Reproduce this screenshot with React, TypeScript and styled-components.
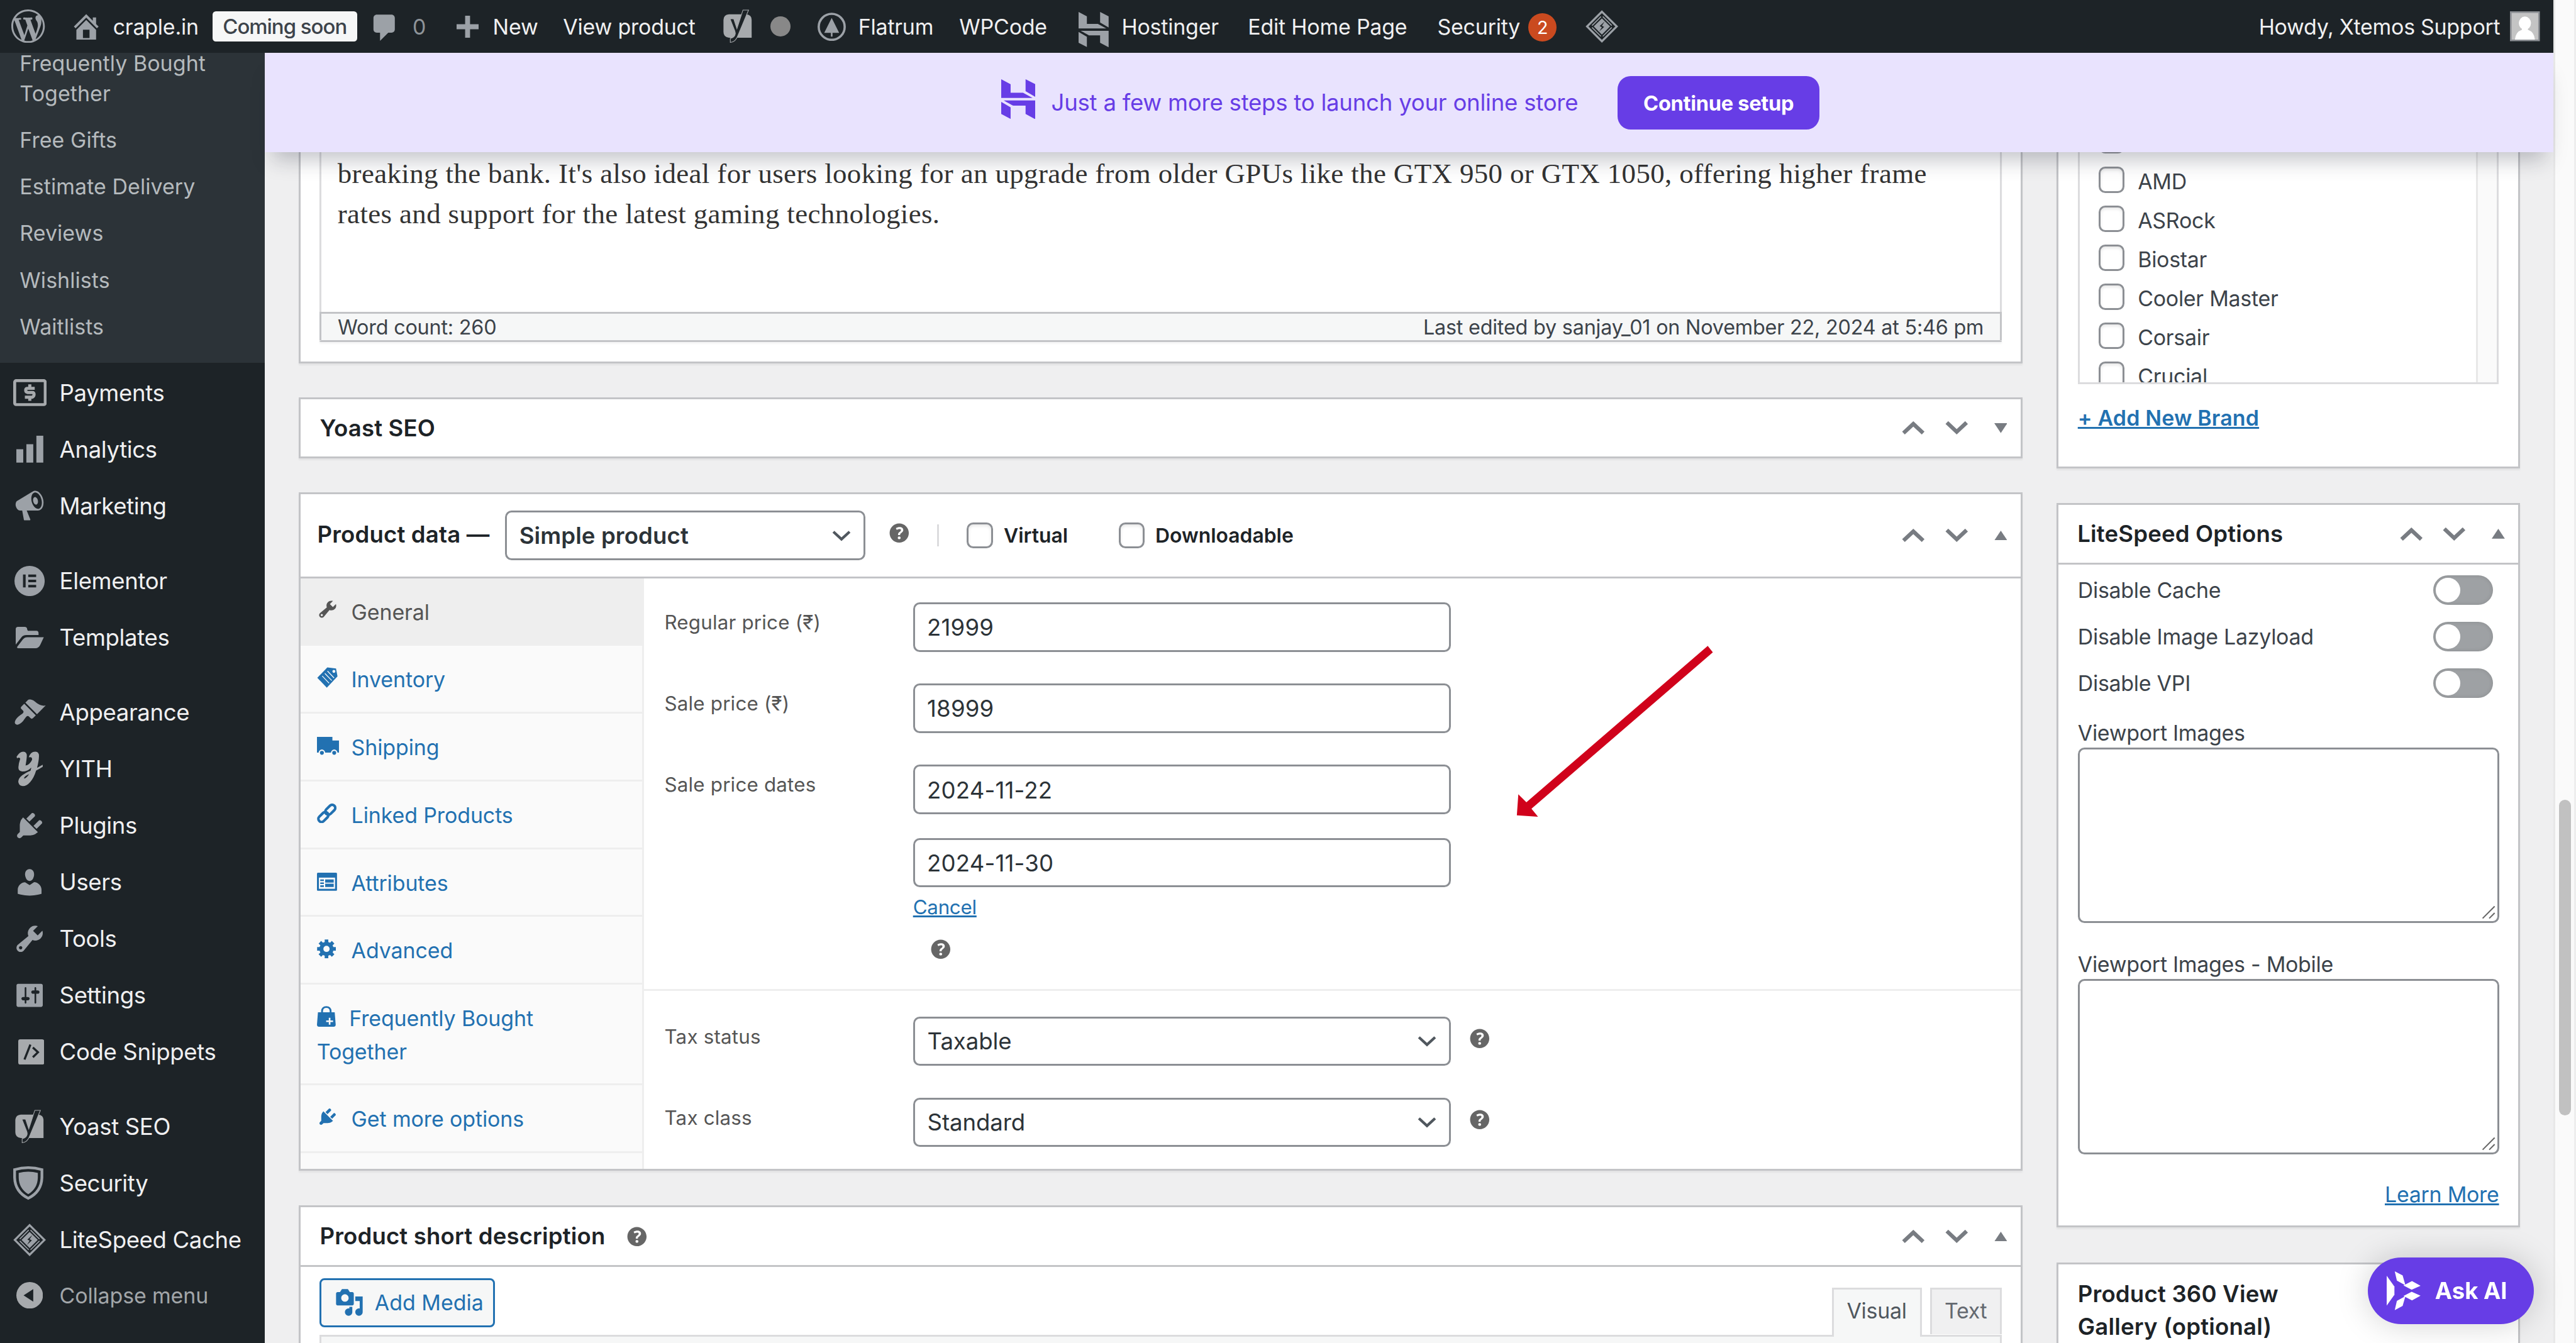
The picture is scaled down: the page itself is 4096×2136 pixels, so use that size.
import React from 'react';
import styled, { createGlobalStyle, css } from 'styled-components';

/* 1rem = ten layout units; every size below is expressed in it. */
const line = '0.115rem';
const c = {
  bar: '#1d2327',
  sub: '#2c3338',
  icon: '#9ca1a7',
  iconSvg: '#a7aaad',
  text: '#f0f0f1',
  ink: '#1d2327',
  body: '#3c434a',
  border: '#c3c4c7',
  field: '#8c8f94',
  link: '#2271b1',
  page: '#efeff0',
  brand: '#673de6',
};

const Global = createGlobalStyle`
  html { font-size: 26.1224px; }
  body { margin: 0; background: ${c.page}; overflow: hidden; }
  * { box-sizing: border-box; }
  #root { font-family: Inter, "Liberation Sans", sans-serif; font-size: 1.3rem; color: ${c.body}; letter-spacing: -0.008em; }
`;

/* ---------- shell ---------- */
const Page = styled.div`
  display: flex;
  width: 156.8rem;
  height: 81.77rem;
  overflow: hidden;
`;
const Shell = styled.div`
  display: flex;
  flex-direction: column;
  width: 155.43rem;
  height: 100%;
  flex: none;
`;
const ScrollTrack = styled.div`
  flex: 1;
  background: #fafafa;
  border-left: ${line} solid #e8e8e8;
  border-right: ${line} solid #ededed;
  padding: 48.7rem 0.16rem 0 0.24rem;
`;
const ScrollThumb = styled.div`
  width: 0.72rem;
  height: 19.2rem;
  border-radius: 0.4rem;
  background: #c1c1c1;
`;
const Body = styled.div`
  display: flex;
  flex: 1;
  min-height: 0;
`;

/* ---------- admin bar ---------- */
const AdminBar = styled.header`
  display: flex;
  align-items: center;
  height: 3.2rem;
  flex: none;
  background: ${c.bar};
  color: ${c.text};
  position: relative;
  z-index: 3;
`;
const BarItem = styled.div<{ $gap: number; $w: number; $dim?: boolean; $drop?: number }>`
  display: flex;
  align-items: center;
  flex: none;
  margin-left: ${(p) => p.$gap}rem;
  width: ${(p) => p.$w}rem;
  padding-top: ${(p) => (p.$drop ?? 0.06)}rem;
  white-space: nowrap;
  color: ${(p) => (p.$dim ? '#8f9499' : c.text)};
  letter-spacing: -0.006em;
`;
const SoonBadge = styled.div`
  display: flex;
  align-items: center;
  justify-content: center;
  flex: none;
  margin-left: 0.84rem;
  width: 8.79rem;
  height: 1.86rem;
  border-radius: 0.2rem;
  background: #f6f7f7;
  color: ${c.body};
  font-size: 1.26rem;
  font-weight: 500;
  letter-spacing: -0.03em;
`;
const CountBadge = styled.div`
  display: flex;
  align-items: center;
  justify-content: center;
  width: 1.72rem;
  height: 1.72rem;
  margin: 0.1rem 0 0 0.44rem;
  border-radius: 50%;
  background: #ca4a1f;
  color: #fff;
  font-size: 1.1rem;
`;
const GreyDot = styled.div`
  width: 1.22rem;
  height: 1.22rem;
  margin-left: 1.1rem;
  border-radius: 50%;
  background: #888;
`;
const BarEnd = styled.div`
  display: flex;
  align-items: center;
  gap: 0.6rem;
  margin-left: auto;
  padding-right: 0.83rem;
`;
const Howdy = styled.span`
  padding-top: 0.06rem;
  letter-spacing: -0.008em;
`;

/* ---------- sidebar ---------- */
const Sidebar = styled.nav`
  display: flex;
  flex-direction: column;
  width: 16.12rem;
  flex: none;
  background: ${c.bar};
`;
const Submenu = styled.div`
  display: flex;
  flex-direction: column;
  justify-content: flex-end;
  height: 18.89rem;
  padding: 0 0 0.77rem 1.2rem;
  background: ${c.sub};
  overflow: hidden;
`;
const SubItem = styled.a<{ $tall?: boolean }>`
  display: flex;
  align-items: center;
  flex: none;
  width: 13rem;
  height: ${(p) => (p.$tall ? 4.67 : 2.84)}rem;
  line-height: 1.84rem;
  color: #b5babd;
  letter-spacing: 0.002em;
`;
const MenuRow = styled.a<{ $gapBefore?: boolean; $muted?: boolean }>`
  display: flex;
  align-items: center;
  flex: none;
  height: ${(p) => (p.$muted ? 3.3 : 3.445)}rem;
  margin-top: ${(p) => (p.$gapBefore ? 1.12 : 0)}rem;
  font-size: ${(p) => (p.$muted ? 1.3 : 1.4)}rem;
  letter-spacing: ${(p) => (p.$muted ? -0.004 : -0.01)}em;
  color: ${(p) => (p.$muted ? '#a2a6a9' : c.text)};
  white-space: nowrap;
`;
const MenuList = styled.div`
  padding-top: 0.1rem;
`;
const IconCell = styled.span`
  display: flex;
  justify-content: center;
  align-items: center;
  width: 3.62rem;
  flex: none;
`;

/* ---------- banner ---------- */
const Content = styled.main`
  display: flex;
  flex-direction: column;
  flex: 1;
  min-width: 0;
  background: ${c.page};
`;
const Banner = styled.div`
  display: flex;
  align-items: center;
  height: 6.07rem;
  flex: none;
  padding-left: 44.84rem;
  background: #e9e3fe;
  box-shadow: 0 1rem 1.2rem -0.5rem rgba(29, 35, 50, 0.27);
  position: relative;
  z-index: 2;
`;
const BannerLogo = styled.span`
  display: flex;
  padding-bottom: 0.42rem;
`;
const BannerText = styled.div`
  width: 35.43rem;
  padding-left: 0.96rem;
  color: ${c.brand};
  font-size: 1.4rem;
  letter-spacing: -0.0065em;
  white-space: nowrap;
`;
const SetupButton = styled.div`
  display: flex;
  align-items: center;
  justify-content: center;
  width: 12.3rem;
  height: 3.28rem;
  margin-top: 0.05rem;
  border-radius: 0.8rem;
  background: ${c.brand};
  color: #fff;
  font-size: 1.25rem;
  font-weight: 700;
  letter-spacing: -0.01em;
`;

/* ---------- post boxes ---------- */
const Canvas = styled.div`
  display: flex;
  gap: 2.07rem;
  flex: 1;
  min-height: 0;
  overflow: hidden;
  padding-left: 2.07rem;
`;
const Column = styled.div<{ $w: number }>`
  display: flex;
  flex-direction: column;
  width: ${(p) => p.$w}rem;
  flex: none;
`;
const Box = styled.section<{ $h: number; $mb?: number; $open?: boolean }>`
  display: flex;
  flex-direction: column;
  flex: none;
  height: ${(p) => p.$h}rem;
  margin-bottom: ${(p) => p.$mb ?? 0}rem;
  background: #fff;
  border: ${line} solid ${c.border};
  ${(p) => p.$open && css`border-top: 0;`}
  box-shadow: 0 0.1rem 0.1rem rgba(0, 0, 0, 0.05);
`;
const BoxHead = styled.div<{ $h: number; $line?: boolean; $pl?: number }>`
  display: flex;
  align-items: center;
  flex: none;
  height: ${(p) => p.$h}rem;
  padding-left: ${(p) => p.$pl ?? 1.16}rem;
  padding-right: 0.82rem;
  ${(p) => p.$line && css`border-bottom: ${line} solid ${c.border};`}
`;
const Title = styled.h2<{ $w?: number }>`
  margin: 0;
  font-size: 1.4rem;
  font-weight: 600;
  letter-spacing: 0.004em;
  color: ${c.ink};
  white-space: nowrap;
  width: ${(p) => (p.$w ? `${p.$w}rem` : 'auto')};
  padding-bottom: ${(p) => (p.$w ? 0.1 : 0)}rem;
`;
const Actions = styled.div`
  display: flex;
  align-items: center;
  margin-left: auto;
`;
const ActionGap = styled.span<{ $w: number }>`
  width: ${(p) => p.$w}rem;
`;

/* ---------- editor ---------- */
const Editor = styled.div`
  display: flex;
  flex-direction: column;
  width: 102.4rem;
  height: 11.57rem;
  margin-left: 1.16rem;
  border: ${line} solid #dcdcde;
  border-top: 0;
  border-bottom-color: ${c.border};
  box-shadow: 0 0.1rem 0.1rem rgba(0, 0, 0, 0.04);
`;
const Prose = styled.p`
  flex: 1;
  margin: 0;
  padding: 0.12rem 0 0 0.97rem;
  font-family: "Liberation Serif", "Noto Serif", serif;
  font-size: 1.72rem;
  line-height: 2.44rem;
  letter-spacing: 0.0082em;
  color: #333;
  white-space: nowrap;
`;
const StatusBar = styled.div`
  display: flex;
  align-items: center;
  justify-content: space-between;
  height: 1.72rem;
  margin: 0 -${line};
  padding: 0 1rem 0 0.98rem;
  border: ${line} solid ${c.border};
  border-bottom: 0;
  background: #f6f7f7;
  font-size: 1.24rem;
  letter-spacing: -0.007em;
`;

/* ---------- product data ---------- */
const field = css`
  display: flex;
  align-items: center;
  justify-content: space-between;
  height: 3rem;
  border: ${line} solid ${c.field};
  border-radius: 0.4rem;
  background: #fff;
  color: #2c3338;
  font-size: 1.4rem;
  flex: none;
`;
const Input = styled.div`
  ${field}
  width: 32.75rem;
  padding: 0.08rem 0 0 0.74rem;
  letter-spacing: 0.005em;
`;
const Select = styled.div<{ $w?: number; $bold?: boolean }>`
  ${field}
  width: ${(p) => p.$w ?? 32.75}rem;
  padding: 0.06rem 0.76rem 0 0.76rem;
  font-weight: ${(p) => (p.$bold ? 600 : 400)};
  letter-spacing: ${(p) => (p.$bold ? 0.003 : -0.002)}em;
`;
const TypeRule = styled.span`
  width: ${line};
  height: 1.35rem;
  margin: 0 1.7rem 0 1.46rem;
  background: #dcdcde;
`;
const Check = styled.span`
  width: 1.6rem;
  height: 1.6rem;
  flex: none;
  border: ${line} solid ${c.field};
  border-radius: 0.4rem;
  background: #fff;
  box-shadow: inset 0 0.1rem 0.2rem rgba(0, 0, 0, 0.1);
`;
const CheckLabel = styled.span<{ $w: number }>`
  width: ${(p) => p.$w}rem;
  padding-left: 0.64rem;
  font-size: 1.22rem;
  font-weight: 600;
  letter-spacing: 0;
  color: ${c.ink};
`;
const DataBody = styled.div`
  display: flex;
  flex: 1;
  min-height: 0;
`;
const Tabs = styled.div`
  width: 20.9rem;
  flex: none;
  background: #fafafa;
  border-right: ${line} solid #eee;
`;
const Tab = styled.a<{ $active?: boolean; $tall?: boolean }>`
  display: block;
  height: ${(p) => (p.$tall ? 6.14 : 4.125)}rem;
  margin-right: ${(p) => (p.$active ? `-${line}` : 0)};
  padding: 1.07rem 2rem 0 0.98rem;
  border-bottom: ${line} solid #eee;
  background: ${(p) => (p.$active ? '#eee' : 'transparent')};
  color: ${(p) => (p.$active ? '#555' : c.link)};
  line-height: 2.02rem;
  letter-spacing: -0.003em;
`;
const TabIcon = styled.span<{ $w?: number }>`
  display: inline-block;
  width: ${(p) => p.$w ?? 2.1}rem;
  svg { display: inline-block; vertical-align: -0.02rem; }
`;
const Form = styled.div`
  flex: 1;
`;
const Group = styled.div<{ $h: number; $top: number; $line?: boolean }>`
  display: flex;
  flex-direction: column;
  gap: 1.94rem;
  height: ${(p) => p.$h}rem;
  padding: ${(p) => p.$top}rem 0 0 1.24rem;
  ${(p) => p.$line && css`border-bottom: ${line} solid #eee;`}
`;
const Row = styled.div`
  display: flex;
  align-items: flex-start;
`;
const Label = styled.label`
  width: 15.13rem;
  line-height: 2.52rem;
  font-size: 1.2rem;
  letter-spacing: 0.006em;
  color: #555;
  white-space: nowrap;
`;
const DateFields = styled.div`
  display: flex;
  flex-direction: column;
  gap: 1.47rem;
`;
const Cancel = styled.a`
  display: block;
  line-height: 2.48rem;
  font-size: 1.2rem;
  color: ${c.link};
  text-decoration: underline;
`;
const HelpSlot = styled.span<{ $l: number; $t: number; $b?: number }>`
  display: flex;
  padding: ${(p) => p.$t}rem 0 ${(p) => p.$b ?? 0}rem ${(p) => p.$l}rem;
`;

/* ---------- short description ---------- */
const MediaRow = styled.div`
  display: flex;
  align-items: flex-start;
  height: 4.11rem;
  padding: 0.66rem 1.16rem 0 1.16rem;
`;
const MediaButton = styled.div`
  display: flex;
  align-items: center;
  gap: 0.65rem;
  width: 10.66rem;
  height: 3rem;
  padding-left: 0.78rem;
  border: ${line} solid ${c.link};
  border-radius: 0.3rem;
  background: #f6f7f7;
  color: ${c.link};
  margin-right: auto;
  letter-spacing: 0;
  white-space: nowrap;
`;
const EditorTab = styled.div<{ $w: number; $on?: boolean }>`
  display: flex;
  align-items: center;
  justify-content: center;
  width: ${(p) => p.$w}rem;
  height: ${(p) => (p.$on ? 3.0 : 2.86)}rem;
  margin: 0.58rem 0 0 0.5rem;
  padding-bottom: ${(p) => (p.$on ? 0.3 : 0.16)}rem;
  border: ${line} solid #dcdcde;
  border-bottom: 0;
  background: ${(p) => (p.$on ? '#f6f7f7' : '#f0f0f1')};
  color: ${(p) => (p.$on ? '#50575e' : '#646970')};
  position: relative;
  z-index: 1;
`;
const EditorFrame = styled.div`
  flex: 1;
  margin: 0 1.16rem;
  border: ${line} solid #dcdcde;
  background: #f6f7f7;
`;

/* ---------- side column ---------- */
const BrandList = styled.div`
  display: flex;
  height: 14.12rem;
  margin: 0 1.2rem 0 1.2rem;
  border: ${line} solid #dcdcde;
  border-top: 0;
  overflow: hidden;
`;
const BrandItems = styled.div`
  display: flex;
  flex-direction: column;
  width: 24.1rem;
  padding-left: 1.12rem;
  margin-top: -1.9rem;
`;
const BrandRow = styled.div`
  display: flex;
  align-items: center;
  flex: none;
  height: 2.376rem;
`;
const BrandName = styled.span`
  padding: 0.2rem 0 0 0.8rem;
`;
const BrandTrack = styled.div`
  flex: 1;
  border-left: ${line} solid #e8e8e8;
  background: #fafafa;
`;
const AddBrand = styled.a`
  margin: 1.14rem 0 0 1.18rem;
  line-height: 1.8rem;
  font-weight: 600;
  letter-spacing: 0.005em;
  color: ${c.link};
  text-decoration: underline;
  align-self: flex-start;
`;
const Toggles = styled.div`
  padding-top: 0.13rem;
`;
const ToggleRow = styled.div`
  display: flex;
  align-items: center;
  justify-content: space-between;
  height: 2.84rem;
  padding: 0 1.55rem 0 1.18rem;
`;
const Toggle = styled.span`
  width: 3.63rem;
  height: 1.8rem;
  padding: 0.16rem;
  border-radius: 0.9rem;
  background: #9ea1a4;
  box-shadow: inset 0 0 0.3rem rgba(0, 0, 0, 0.12);
`;
const Knob = styled.span`
  display: block;
  width: 1.48rem;
  height: 1.48rem;
  border-radius: 50%;
  background: #fff;
`;
const AreaLabel = styled.div<{ $mt: number }>`
  margin: ${(p) => p.$mt}rem 0 0 1.18rem;
  line-height: 1.8rem;
`;
const Area = styled.div`
  display: flex;
  align-items: flex-end;
  justify-content: flex-end;
  flex: none;
  width: 25.64rem;
  height: 10.66rem;
  margin-left: 1.18rem;
  padding: 0.1rem;
  border: ${line} solid ${c.field};
  border-radius: 0.4rem;
`;
const LearnMore = styled.a`
  align-self: flex-end;
  margin: 1.54rem 1.18rem 0 0;
  line-height: 1.8rem;
  color: ${c.link};
  text-decoration: underline;
`;
const GalleryTitle = styled.h2`
  margin: 0.87rem 0 0 1.18rem;
  width: 15rem;
  font-size: 1.4rem;
  font-weight: 600;
  line-height: 1.96rem;
  letter-spacing: 0.005em;
  color: ${c.ink};
`;

/* ---------- overlays ---------- */
const AskButton = styled.div`
  position: fixed;
  left: 144.14rem;
  top: 76.56rem;
  display: flex;
  align-items: center;
  gap: 0.88rem;
  width: 10.1rem;
  height: 4.05rem;
  padding-left: 1.14rem;
  border-radius: 2.1rem;
  background: ${c.brand};
  box-shadow: 0 0 2rem rgba(0, 0, 0, 0.18);
  color: #fff;
  font-size: 1.4rem;
  font-weight: 700;
  letter-spacing: 0;
  white-space: nowrap;
  z-index: 5;
`;
const Pointer = styled.svg`
  position: fixed;
  left: 92rem;
  top: 39rem;
  width: 12.6rem;
  height: 11rem;
  z-index: 4;
`;

/* ---------- icons ---------- */
type IconProps = { size?: number; color?: string };
const Dash = ({ d, size = 20, color = c.icon }: IconProps & { d: string }) => (
  <svg width={`${size / 10}rem`} height={`${size / 10}rem`} viewBox="0 0 20 20" fill={color} fillRule="evenodd"><path d={d} /></svg>
);
const P = {
  wp: 'M20 10c0-5.51-4.49-10-10-10C4.48 0 0 4.49 0 10c0 5.52 4.48 10 10 10 5.51 0 10-4.48 10-10zM7.78 15.37L4.37 6.22c.55-.02 1.17-.08 1.17-.08.5-.06.44-1.13-.06-1.11 0 0-1.45.11-2.37.11-.18 0-.37 0-.58-.01C4.12 2.69 6.87 1.11 10 1.11c2.33 0 4.45.87 6.05 2.34-.68-.11-1.65.39-1.65 1.58 0 .74.45 1.36.9 2.1.35.61.55 1.36.55 2.46 0 1.49-1.4 5-1.4 5l-3.03-8.37c.54-.02.82-.17.82-.17.5-.05.44-1.25-.06-1.22 0 0-1.44.12-2.38.12-.87 0-2.33-.12-2.33-.12-.5-.03-.56 1.2-.06 1.22l.92.08 1.26 3.41zM17.41 10c.24-.64.74-1.87.43-4.25.7 1.29 1.05 2.71 1.05 4.25 0 3.29-1.73 6.24-4.4 7.78.97-2.59 1.94-5.2 2.92-7.78zM6.1 18.09C3.12 16.65 1.11 13.53 1.11 10c0-1.3.23-2.48.72-3.59C3.25 10.3 4.67 14.2 6.1 18.09zm4.03-6.63l2.58 6.98c-.86.29-1.76.45-2.71.45-.79 0-1.57-.11-2.29-.33.81-2.38 1.62-4.74 2.42-7.1z',
  home: 'M16 8.5l1.53 1.53-1.06 1.06L10 4.6l-6.47 6.49-1.06-1.06L10 2.5l4 4v-2h2v4zm-6-2.46l6 5.99V18H4v-5.97zM12 17v-5H8v5h4z',
  comment: 'M5 2h9c1.1 0 2 .9 2 2v7c0 1.1-.9 2-2 2h-2l-5 5v-5H5c-1.1 0-2-.9-2-2V4c0-1.1.9-2 2-2z',
  plug: 'M13.11 4.36L9.87 7.6 8 5.73l3.24-3.24c.35-.34 1.05-.2 1.56.32.52.51.66 1.21.31 1.55zm-8 1.77l.91-1.12 9.01 9.01-1.19.84c-.71.71-2.63 1.16-3.82 1.16H6.14L4.9 17.26c-.59.59-1.54.59-2.12 0-.59-.58-.59-1.53 0-2.12l1.24-1.24v-3.88c0-1.13.4-3.19 1.09-3.89zm7.26 3.97l3.24-3.24c.34-.35 1.04-.21 1.55.31.52.51.66 1.21.31 1.55l-3.24 3.25z',
  user: 'M10 9.25c-2.27 0-2.73-3.44-2.73-3.44C7 4.02 7.82 2 9.97 2c2.16 0 2.98 2.02 2.71 3.81 0 0-.41 3.44-2.68 3.44zm0 2.57L12.72 10c2.39 0 4.52 2.33 4.52 4.53v2.49s-3.65 1.13-7.24 1.13c-3.65 0-7.24-1.13-7.24-1.13v-2.49c0-2.25 1.94-4.48 4.47-4.48z',
  tool: 'M16.68 9.77c-1.34 1.34-3.3 1.67-4.95.99l-5.41 6.52c-.99.99-2.59.99-3.58 0s-.99-2.59 0-3.57l6.52-5.42c-.68-1.65-.35-3.61.99-4.95 1.28-1.28 3.12-1.62 4.72-1.06l-2.89 2.89 2.82 2.82 2.86-2.87c.53 1.58.18 3.39-1.08 4.65zM3.81 16.21c.4.39 1.04.39 1.43 0 .4-.4.4-1.04 0-1.43-.39-.4-1.03-.4-1.43 0-.39.39-.39 1.03 0 1.43z',
  settings: 'M18 16V4c0-.55-.45-1-1-1H3c-.55 0-1 .45-1 1v12c0 .55.45 1 1 1h14c.55 0 1-.45 1-1zM8 11h1c.55 0 1 .45 1 1s-.45 1-1 1H8v1.5c0 .28-.22.5-.5.5s-.5-.22-.5-.5V13H6c-.55 0-1-.45-1-1s.45-1 1-1h1V5.5c0-.28.22-.5.5-.5s.5.22.5.5V11zm5-2h-1c-.55 0-1-.45-1-1s.45-1 1-1h1V5.5c0-.28.22-.5.5-.5s.5.22.5.5V7h1c.55 0 1 .45 1 1s-.45 1-1 1h-1v5.5c0 .28-.22.5-.5.5s-.5-.22-.5-.5V9z',
  brush: 'M14.48 11.06L7.41 3.99l1.5-1.5c.5-.56 2.3-.47 3.51.32 1.21.8 1.43 1.28 2.91 2.1 1.18.64 2.45 1.26 4.45.85zm-.71.71L6.7 4.7 4.93 6.47c-.39.39-.39 1.02 0 1.41l1.06 1.06c.39.39.39 1.03 0 1.42-.6.6-1.43 1.11-2.21 1.69-.35.26-.7.53-1.01.84C1.43 14.23.4 16.08 1.4 17.07c.99 1 2.84-.03 4.18-1.36.31-.31.58-.66.85-1.02.57-.78 1.08-1.61 1.69-2.21.39-.39 1.02-.39 1.41 0l1.06 1.06c.39.39 1.02.39 1.41 0z',
  megaphone: 'M18.15 5.94c.46 1.62.38 3.22-.02 4.48-.42 1.28-1.26 2.18-2.3 2.48-.16.06-.26.06-.4.06-.06.02-.12.02-.18.02-.06.02-.14.02-.22.02h-6.8l2.22 5.5c.02.14-.06.26-.14.34-.08.1-.24.16-.34.16H6.95c-.1 0-.26-.06-.34-.16-.08-.08-.16-.2-.14-.34l-1-5.5H4.25l-.02-.02c-.5.06-1.08-.18-1.54-.62s-.88-1.08-1.06-1.88c-.24-.8-.2-1.56-.02-2.2.18-.62.58-1.08 1.06-1.3l.02-.02 9-5.4c.1-.06.18-.1.24-.16.06-.04.14-.08.24-.12.16-.08.28-.12.5-.18 1.04-.3 2.24.1 3.22.98s1.84 2.24 2.26 3.86zm-2.58 5.98h-.02c.4-.1.74-.34 1.04-.7.58-.7.86-1.76.86-3.04 0-.64-.1-1.3-.28-1.98-.34-1.36-1.02-2.5-1.78-3.24s-1.68-1.1-2.46-.88c-.82.22-1.4.96-1.7 2-.32 1.04-.28 2.36.06 3.72.38 1.36 1 2.5 1.8 3.24.78.74 1.62 1.1 2.48.88zm-2.54-7.08c.22-.04.42-.02.62.04.38.16.76.48 1.02 1s.42 1.2.42 1.78c0 .3-.04.56-.12.8-.18.48-.44.84-.86.94-.34.1-.8-.06-1.14-.4s-.64-.86-.78-1.5c-.18-.62-.12-1.24.02-1.72s.48-.84.82-.94z',
  help: 'M17 10c0-3.87-3.14-7-7-7-3.87 0-7 3.13-7 7s3.13 7 7 7c3.86 0 7-3.13 7-7zm-6.3 1.48H9.14v-.43c0-.38.08-.7.24-.98s.46-.57.88-.89c.41-.29.68-.53.81-.71.14-.18.2-.39.2-.62 0-.25-.09-.44-.28-.58-.19-.13-.45-.19-.79-.19-.58 0-1.25.19-2 .57l-.64-1.28c.87-.49 1.8-.74 2.77-.74.81 0 1.45.2 1.92.58.48.39.71.91.71 1.55 0 .43-.09.8-.29 1.11-.19.32-.57.67-1.11 1.06-.38.28-.61.49-.71.63-.1.15-.15.34-.15.57v.35zm-1.47 2.74c-.18-.17-.27-.42-.27-.73 0-.33.08-.58.26-.75s.43-.25.77-.25c.32 0 .57.09.75.26s.27.42.27.74c0 .3-.09.55-.27.72-.18.18-.43.27-.75.27-.33 0-.58-.09-.76-.26z',
  media: 'M13 11V4c0-.55-.45-1-1-1h-1.67L9 1H5L3.67 3H2c-.55 0-1 .45-1 1v7c0 .55.45 1 1 1h10c.55 0 1-.45 1-1zM7 4.5c1.38 0 2.5 1.12 2.5 2.5S8.38 9.5 7 9.5 4.5 8.38 4.5 7 5.62 4.5 7 4.5zM14 6h5v10.5c0 1.38-1.12 2.5-2.5 2.5S14 17.88 14 16.5s1.12-2.5 2.5-2.5c.17 0 .34.02.5.05V9h-3V6zm-4 8.05V13h2v3.5c0 1.38-1.12 2.5-2.5 2.5S7 17.88 7 16.5 8.12 14 9.5 14c.17 0 .34.02.5.05z',
};
const Help = () => <Dash d={P.help} size={16.7} color="#666" />;

const Hostinger = ({ w, color }: { w: number; color: string }) => (
  <svg width={`${w}rem`} height={`${w * 1.176}rem`} viewBox="1.8 0 20.4 24" fill={color}>
    <path d="M16.415 0v7.16l5.785 3.384V2.949L16.415 0ZM1.8 0v11.237h18.815L14.89 8.09l-7.457-.003V3.024L1.8 0Zm14.615 20.894v-5.019l-7.514-.005c.007.033-5.82-3.197-5.82-3.197l19.119.091V24l-5.785-3.106ZM1.8 13.551v7.343l5.633 2.949v-6.988L1.8 13.551Z" />
  </svg>
);
const Yoast = () => (
  <svg width="1.75rem" height="2.05rem" viewBox="78 60 252 295">
    <path d="M128 103H282Q327 108 327 152V308H128Q80 303 80 257V152Q82 107 128 103Z" fill={c.iconSvg} />
    <path d="M251 65H300L208 285Q188 346 140 349V313Q172 309 181 284Q187 268 180 250L138 143H170L198 228Z" fill={c.bar} stroke={c.iconSvg} strokeWidth="6" />
  </svg>
);
const ShieldSvg = styled.svg`
  margin-right: 0.2rem;
`;
const Shield = () => (
  <ShieldSvg width="1.84rem" height="2.05rem" viewBox="54 551 265 296">
    <path d="M66 580Q186 546 306 580V650Q302 775 186 832Q70 775 66 650Z" fill="none" stroke={c.icon} strokeWidth="24" />
    <path d="M102 609Q186 587 270 609V650Q268 745 186 796Q104 745 102 650Z" fill={c.icon} />
  </ShieldSvg>
);
const LiteSpeed = () => (
  <svg width="2rem" height="2rem" viewBox="-145 -145 290 290">
    <path d="M0-131L131 0L0 131L-131 0Z" fill="none" stroke={c.icon} strokeWidth="18" />
    <path d="M-8-87L-87-8M8-87L87-8M-8 87L-87 8M8 87L87 8" stroke={c.icon} strokeWidth="9" fill="none" />
    <path d="M0-72L72 0L0 72L-72 0Z" fill={c.icon} />
    <path d="M24-44L-20-4L0 6L-24 44L20 4L0-6Z" fill={c.bar} />
  </svg>
);
const Payments = () => (
  <svg width="2.04rem" height="1.64rem" viewBox="0 0 20.4 16.4">
    <rect x="0.9" y="0.9" width="18.6" height="14.6" rx="0.9" fill="none" stroke={c.iconSvg} strokeWidth="1.8" />
    <path d="M13.1 5.6H8.7Q7.6 5.6 7.6 6.7T8.7 8.1H11.6Q12.7 8.1 12.7 9.3T11.6 11H7.1M10.1 3.2V5.4M10.1 11V13.2" fill="none" stroke={c.iconSvg} strokeWidth="1.9" />
  </svg>
);
const Bars = () => (
  <svg width="1.64rem" height="1.64rem" viewBox="0 0 16.4 16.4" fill={c.icon}>
    <path d="M0 8.2h4.2v8.2H0zM6.1 5.2h4.2v11.2H6.1zM12.2 0h4.2v16.4h-4.2z" />
  </svg>
);
const Elementor = () => (
  <svg width="1.84rem" height="1.84rem" viewBox="0 0 18.4 18.4">
    <circle cx="9.2" cy="9.2" r="9.2" fill={c.icon} />
    <path d="M5.2 5.3h1.6v7.8H5.2zM8.4 5.3h4.8v1.5H8.4zM8.4 8.4h4.8V10H8.4zM8.4 11.6h4.8v1.5H8.4z" fill={c.bar} />
  </svg>
);
const Folder = () => (
  <svg width="1.72rem" height="1.3rem" viewBox="0 0 17.2 13" fill={c.icon}>
    <path d="M0 10.8V1.4Q0 0 1.4 0H5.4Q6.9 0 7 1.6L7.4 2.4H12.6Q13.9 2.4 13.9 4V5H6.6Q4.4 5 3.3 6.6Z" />
    <path d="M0.9 12.2L4.4 7.6Q5.4 6.3 7 6.3H17.1L15 10.8Q14 13 12 13H1.8Q0.5 13 0.9 12.2Z" />
  </svg>
);
const Yith = () => (
  <svg width="1.62rem" height="2.12rem" viewBox="84 455 234 306">
    <path fill={c.iconSvg} d="M86 502Q112 458 145 457Q178 458 176 498Q174 530 165 580Q200 575 222 530Q226 500 193 508Q208 456 252 457Q285 458 283 498Q282 540 266 600L316 572V590Q285 610 258 624Q238 690 205 726Q175 761 140 761Q100 755 101 718Q104 680 160 650Q195 630 208 627L216 597Q180 634 135 632Q100 628 102 595Q104 560 118 520Q112 502 90 516Z" />
    <path fill={c.bar} d="M196 656Q150 676 152 694Q172 694 196 656Z" />
  </svg>
);
const SnippetsSvg = styled.svg`
  margin-left: 0.15rem;
`;
const Snippets = () => (
  <SnippetsSvg width="1.58rem" height="1.54rem" viewBox="0 0 15.8 15.4">
    <rect width="15.8" height="15.4" rx="1.2" fill={c.iconSvg} />
    <path d="M7.4 3.2L3.8 12.3M8.9 5L12 7.9L8.9 10.9" fill="none" stroke={c.bar} strokeWidth="1.3" />
  </SnippetsSvg>
);
const Collapse = () => (
  <svg width="1.62rem" height="1.62rem" viewBox="0 0 16.2 16.2">
    <circle cx="8.1" cy="8.1" r="8.1" fill={c.iconSvg} />
    <path d="M10.3 4.3V12L4.4 8.1Z" fill={c.bar} />
  </svg>
);
const Flatrum = () => (
  <svg width="1.74rem" height="1.74rem" viewBox="0 0 17.4 17.4">
    <circle cx="8.7" cy="8.7" r="8" fill="none" stroke={c.icon} strokeWidth="1.4" />
    <path d="M8.7 3.2L13.3 12.4H4.1Z" fill={c.icon} />
    <path d="M8.7 12v2.7" stroke={c.icon} strokeWidth="1" />
  </svg>
);
const Plus = () => (
  <svg width="1.34rem" height="1.34rem" viewBox="0 0 13.4 13.4"><path d="M6.7 0V13.4M0 6.7H13.4" stroke={c.icon} strokeWidth="3" /></svg>
);
const Avatar = () => (
  <svg width="1.82rem" height="1.82rem" viewBox="0 0 18.2 18.2">
    <rect x="0.5" y="0.5" width="17.2" height="17.2" fill="#c4c4c4" stroke={c.field} />
    <ellipse cx="9.1" cy="7.2" rx="3.7" ry="4" fill="#fff" />
    <path d="M3 17.2Q3.4 12.6 7.3 11.2L7.2 9.6H11L10.9 11.2Q14.8 12.6 15.2 17.2Z" fill="#fff" />
  </svg>
);
const Chevron = ({ up, w = 14, color = '#787c82', sw = 2.4 }: { up?: boolean; w?: number; color?: string; sw?: number }) => (
  <svg width={`${w / 10}rem`} height={`${(w * 0.57) / 10}rem`} viewBox="0 0 14 8">
    <path d={up ? 'M1 7.2L7 1.6L13 7.2' : 'M1 0.8L7 6.4L13 0.8'} fill="none" stroke={color} strokeWidth={sw} />
  </svg>
);
const Triangle = ({ up }: { up?: boolean }) => (
  <svg width="0.8rem" height="0.6rem" viewBox="0 0 8 6"><path d={up ? 'M0 6L4 0L8 6Z' : 'M0 0L4 6L8 0Z'} fill="#787c82" /></svg>
);
const Handles = ({ open }: { open?: boolean }) => (
  <Actions>
    <Chevron up />
    <ActionGap $w={1.22} />
    <Chevron />
    <ActionGap $w={1.58} />
    <Triangle up={open} />
  </Actions>
);
const Grip = () => (
  <svg width="0.85rem" height="0.85rem" viewBox="0 0 8.5 8.5"><path d="M0.6 7.9L7.9 0.6M4.6 7.9L7.9 4.6" stroke="#666" strokeWidth="0.8" /></svg>
);
const TagIcon = () => (
  <svg width="1.27rem" height="1.27rem" viewBox="0 0 12.7 12.7">
    <path d="M6.3 0.2L11.6 0.9L12.5 5.6L6 12.5L0.2 6.5Z" fill={c.link} />
    <circle cx="10.3" cy="2.6" r="0.9" fill="#fafafa" />
    <path d="M3.2 5.4L7.4 9.8M4.8 3.8L9 8.2M6.4 2.4L10.4 6.6" stroke="#fafafa" strokeWidth="0.5" />
  </svg>
);
const TruckIcon = () => (
  <svg width="1.35rem" height="1.15rem" viewBox="0 0 13.5 11.5">
    <path d="M0 0H9.4V2.2H13.4V9.6H0Z" fill={c.link} />
    <circle cx="3" cy="9.7" r="1.6" fill={c.link} stroke="#fafafa" strokeWidth="0.8" />
    <circle cx="10.5" cy="9.7" r="1.6" fill={c.link} stroke="#fafafa" strokeWidth="0.8" />
  </svg>
);
const LinkIcon = () => (
  <svg width="1.2rem" height="1.2rem" viewBox="0 0 12 12" fill="none" stroke={c.link} strokeWidth="1.6">
    <rect x="4.6" y="1.9" width="7" height="3.8" rx="1.9" transform="rotate(-45 8.1 3.8)" />
    <rect x="0.4" y="6.3" width="7" height="3.8" rx="1.9" transform="rotate(-45 3.9 8.2)" />
  </svg>
);
const AttrIcon = () => (
  <svg width="1.22rem" height="1.1rem" viewBox="0 0 12.2 11">
    <rect width="12.2" height="11" rx="0.6" fill={c.link} />
    <rect x="1.2" y="3" width="9.8" height="6.8" fill="#fafafa" />
    <path d="M2 4.1h2.2v1H2zM2 5.9h2.2v1H2zM2 7.7h2.2v1H2zM5 4.1h5.2v1.9H5zM5 6.7h5.2v2H5z" fill={c.link} />
  </svg>
);
const GearIcon = () => (
  <svg width="1.16rem" height="1.16rem" viewBox="-5.8 -5.8 11.6 11.6">
    <circle r="3.1" fill="none" stroke={c.link} strokeWidth="2.4" />
    {[0, 45, 90, 135, 180, 225, 270, 315].map((a) => (
      <rect key={a} x="-1.1" y="-5.7" width="2.2" height="2.4" fill={c.link} transform={`rotate(${a})`} />
    ))}
  </svg>
);
const BagIcon = () => (
  <svg width="1.14rem" height="1.26rem" viewBox="0 0 11.4 12.6">
    <path d="M3.1 4V3Q3.3 0.6 5.7 0.6T8.3 3V4" fill="none" stroke={c.link} strokeWidth="1.1" />
    <path d="M0.6 3.8H10.8L11.4 11.4Q11.4 12.6 10.2 12.6H1.2Q0 12.6 0 11.4Z" fill={c.link} />
    <path d="M7.7 7.2V11.4M5.6 9.3H9.8" stroke="#fafafa" strokeWidth="1" />
  </svg>
);
const AskIcon = () => (
  <svg width="2.06rem" height="2.36rem" viewBox="0 0 20.6 23.6" fill="#fff">
    <path d="M0 2.7L4.7 9.3V14.3L0 20.9Z" />
    <path d="M4.9 0L9.7 2.5L11.4 8.5L6.2 5.6Z" />
    <path d="M4.9 23.6L9.7 21.1L11.4 15.1L6.2 18Z" />
    <path d="M10.2 8.6L15.4 5.9L20.6 8.8L15.2 11.2Z" />
    <path d="M10.2 15L15.4 17.7L20.6 14.8L15.2 12.4Z" />
  </svg>
);

/* ---------- data ---------- */
const submenu = ['Free Gifts', 'Estimate Delivery', 'Reviews', 'Wishlists', 'Waitlists'];
const menu: { label: string; icon: React.ReactNode; gap?: boolean }[] = [
  { label: 'Payments', icon: <Payments /> },
  { label: 'Analytics', icon: <Bars /> },
  { label: 'Marketing', icon: <Dash d={P.megaphone} /> },
  { label: 'Elementor', icon: <Elementor />, gap: true },
  { label: 'Templates', icon: <Folder /> },
  { label: 'Appearance', icon: <Dash d={P.brush} />, gap: true },
  { label: 'YITH', icon: <Yith /> },
  { label: 'Plugins', icon: <Dash d={P.plug} /> },
  { label: 'Users', icon: <Dash d={P.user} /> },
  { label: 'Tools', icon: <Dash d={P.tool} /> },
  { label: 'Settings', icon: <Dash d={P.settings} /> },
  { label: 'Code Snippets', icon: <Snippets /> },
  { label: 'Yoast SEO', icon: <Yoast />, gap: true },
  { label: 'Security', icon: <Shield /> },
  { label: 'LiteSpeed Cache', icon: <LiteSpeed /> },
];
const tabs: { label: string; icon: React.ReactNode; active?: boolean; tall?: boolean }[] = [
  { label: 'General', icon: <Dash d={P.tool} size={13} color="#555" />, active: true },
  { label: 'Inventory', icon: <TagIcon /> },
  { label: 'Shipping', icon: <TruckIcon /> },
  { label: 'Linked Products', icon: <LinkIcon /> },
  { label: 'Attributes', icon: <AttrIcon /> },
  { label: 'Advanced', icon: <GearIcon /> },
  { label: 'Frequently Bought Together', icon: <BagIcon />, tall: true },
  { label: 'Get more options', icon: <Dash d={P.plug} size={13} color={c.link} /> },
];
const brands = ['', 'AMD', 'ASRock', 'Biostar', 'Cooler Master', 'Corsair', 'Crucial'];

export default function App() {
  return (
    <>
      <Global />
      <Page>
        <Shell>
          <AdminBar>
            <BarItem $gap={0.7} $w={2.04} $drop={0}><Dash d={P.wp} size={20.4} /></BarItem>
            <BarItem $gap={1.5} $w={2} $drop={0.05}><Dash d={P.home} /></BarItem>
            <BarItem $gap={0.64} $w={5.22}>craple.in</BarItem>
            <SoonBadge>Coming soon</SoonBadge>
            <BarItem $gap={0.7} $w={2} $drop={0.14}><Dash d={P.comment} /></BarItem>
            <BarItem $gap={0.69} $w={0.88} $dim>0</BarItem>
            <BarItem $gap={1.8} $w={1.34}><Plus /></BarItem>
            <BarItem $gap={0.86} $w={2.8}>New</BarItem>
            <BarItem $gap={1.48} $w={8.22}>View product</BarItem>
            <BarItem $gap={1.53} $w={1.77} $drop={0}><Yoast /></BarItem>
            <GreyDot />
            <BarItem $gap={1.66} $w={1.72} $drop={0.05}><Flatrum /></BarItem>
            <BarItem $gap={0.75} $w={4.75}>Flatrum</BarItem>
            <BarItem $gap={1.4} $w={5.5}>WPCode</BarItem>
            <BarItem $gap={1.76} $w={1.83} $drop={0.4}><Hostinger w={1.83} color={c.icon} /></BarItem>
            <BarItem $gap={0.79} $w={6.12}>Hostinger</BarItem>
            <BarItem $gap={1.57} $w={9.83}>Edit Home Page</BarItem>
            <BarItem $gap={1.7} $w={5.1}>Security</BarItem>
            <CountBadge>2</CountBadge>
            <BarItem $gap={1.74} $w={2} $drop={0}><LiteSpeed /></BarItem>
            <BarEnd><Howdy>Howdy, Xtemos Support</Howdy><Avatar /></BarEnd>
          </AdminBar>
          <Body>
            <Sidebar>
              <Submenu>
                <SubItem $tall>Frequently Bought<br />Together</SubItem>
                {submenu.map((s) => <SubItem key={s}>{s}</SubItem>)}
              </Submenu>
              <MenuList>
                {menu.map((m) => (
                  <MenuRow key={m.label} $gapBefore={m.gap}><IconCell>{m.icon}</IconCell>{m.label}</MenuRow>
                ))}
                <MenuRow $muted><IconCell><Collapse /></IconCell>Collapse menu</MenuRow>
              </MenuList>
            </Sidebar>
            <Content>
              <Banner>
                <BannerLogo><Hostinger w={2.07} color={c.brand} /></BannerLogo>
                <BannerText>Just a few more steps to launch your online store</BannerText>
                <SetupButton>Continue setup</SetupButton>
              </Banner>
              <Canvas>
                <Column $w={104.92}>
                  <Box $h={12.86} $mb={2.07} $open>
                    <Editor>
                      <Prose>
                        breaking the bank. It's also ideal for users looking for an upgrade from older GPUs like the GTX 950 or GTX 1050, offering higher frame<br />
                        rates and support for the latest gaming technologies.
                      </Prose>
                      <StatusBar>
                        <span>Word count: 260</span>
                        <span>Last edited by sanjay_01 on November 22, 2024 at 5:46 pm</span>
                      </StatusBar>
                    </Editor>
                  </Box>
                  <Box $h={3.69} $mb={2.1}>
                    <BoxHead $h={3.5}><Title>Yoast SEO</Title><Handles /></BoxHead>
                  </Box>
                  <Box $h={41.29} $mb={2.12}>
                    <BoxHead $h={5.1} $line $pl={1.01}>
                      <Title $w={11.42}>Product data —</Title>
                      <Select $w={21.93} $bold>Simple product<Chevron w={11.5} color="#50575e" sw={2} /></Select>
                      <HelpSlot $l={1.25} $t={0} $b={0.26}><Help /></HelpSlot>
                      <TypeRule />
                      <Check /><CheckLabel $w={7.63}>Virtual</CheckLabel>
                      <Check /><CheckLabel $w={10}>Downloadable</CheckLabel>
                      <Handles open />
                    </BoxHead>
                    <DataBody>
                      <Tabs>
                        {tabs.map((t) => (
                          <Tab key={t.label} $active={t.active} $tall={t.tall}>
                            <TabIcon $w={t.tall ? 1.97 : 2.1}>{t.icon}</TabIcon>{t.label}
                          </Tab>
                        ))}
                      </Tabs>
                      <Form>
                        <Group $h={25.14} $top={1.48} $line>
                          <Row><Label>Regular price (₹)</Label><Input>21999</Input></Row>
                          <Row><Label>Sale price (₹)</Label><Input>18999</Input></Row>
                          <Row>
                            <Label>Sale price dates</Label>
                            <div>
                              <DateFields>
                                <Input>2024-11-22</Input>
                                <Input>2024-11-30</Input>
                              </DateFields>
                              <Cancel>Cancel</Cancel>
                              <HelpSlot $l={0.85} $t={0.44}><Help /></HelpSlot>
                            </div>
                          </Row>
                        </Group>
                        <Group $h={11} $top={1.54}>
                          {[['Tax status', 'Taxable'], ['Tax class', 'Standard']].map(([l, v]) => (
                            <Row key={l}>
                              <Label>{l}</Label>
                              <Select>{v}<Chevron w={11.5} color="#50575e" sw={2} /></Select>
                              <HelpSlot $l={0.9} $t={0.5}><Help /></HelpSlot>
                            </Row>
                          ))}
                        </Group>
                      </Form>
                    </DataBody>
                  </Box>
                  <Box $h={10}>
                    <BoxHead $h={3.64} $line>
                      <Title>Product short description</Title>
                      <HelpSlot $l={1.08} $t={0}><Help /></HelpSlot>
                      <Handles open />
                    </BoxHead>
                    <MediaRow>
                      <MediaButton><Dash d={P.media} size={18} color={c.link} />Add Media</MediaButton>
                      <EditorTab $w={5.48} $on>Visual</EditorTab>
                      <EditorTab $w={4.36}>Text</EditorTab>
                    </MediaRow>
                    <EditorFrame />
                  </Box>
                </Column>
                <Column $w={28.23}>
                  <Box $h={19.25} $mb={2.12} $open>
                    <BrandList>
                      <BrandItems>
                        {brands.map((b, i) => <BrandRow key={i}><Check />{b && <BrandName>{b}</BrandName>}</BrandRow>)}
                      </BrandItems>
                      <BrandTrack />
                    </BrandList>
                    <AddBrand>+ Add New Brand</AddBrand>
                  </Box>
                  <Box $h={44.1} $mb={2.12}>
                    <BoxHead $h={3.62} $line><Title>LiteSpeed Options</Title><Handles open /></BoxHead>
                    <Toggles>
                      {['Disable Cache', 'Disable Image Lazyload', 'Disable VPI'].map((t) => (
                        <ToggleRow key={t}><span>{t}</span><Toggle><Knob /></Toggle></ToggleRow>
                      ))}
                    </Toggles>
                    <AreaLabel $mt={0.7}>Viewport Images</AreaLabel>
                    <Area><Grip /></Area>
                    <AreaLabel $mt={1.63}>Viewport Images - Mobile</AreaLabel>
                    <Area><Grip /></Area>
                    <LearnMore>Learn More</LearnMore>
                  </Box>
                  <Box $h={10}>
                    <GalleryTitle>Product 360 View Gallery (optional)</GalleryTitle>
                  </Box>
                </Column>
              </Canvas>
            </Content>
          </Body>
        </Shell>
        <ScrollTrack><ScrollThumb /></ScrollTrack>
      </Page>
      <Pointer viewBox="920 390 126 110">
        <path d="M1039.6 393.2L1042.7 397.1L932.3 492.3L936.3 497.2L923.4 496.3L924.3 483.5L929.2 488.4Z" fill="#d0021b" />
      </Pointer>
      <AskButton><AskIcon />Ask AI</AskButton>
    </>
  );
}
